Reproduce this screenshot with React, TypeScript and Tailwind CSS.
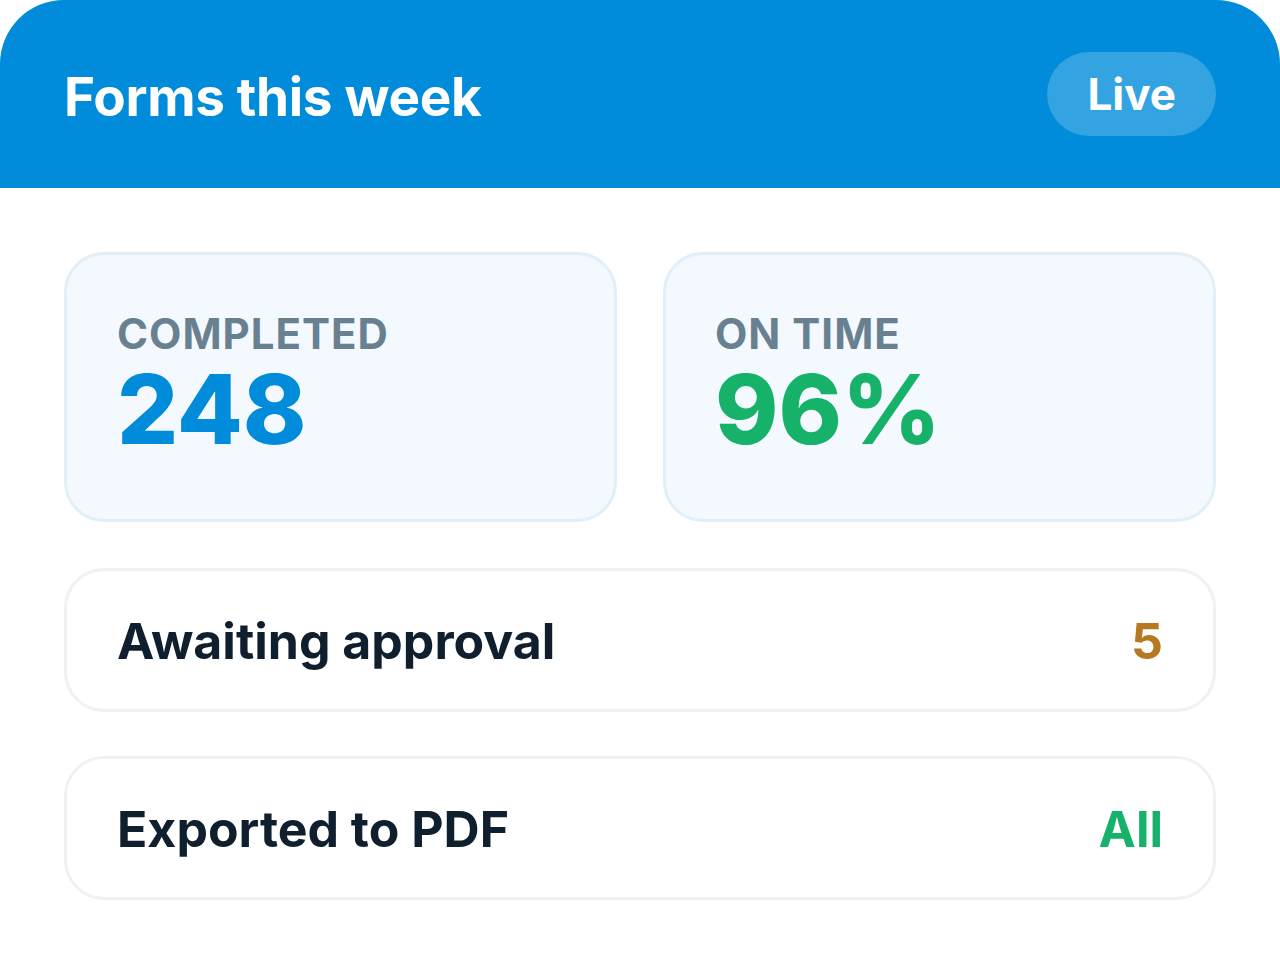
import React from "react";

export default function App() {
  return (
    <div className="w-[1280px] h-[964px] bg-white" style={{ fontFamily: "Inter, 'Noto Sans', sans-serif" }}>
      <div className="bg-[#008cdb] rounded-t-[64px] h-[188px] px-[64px] flex items-center justify-between">
        <h1 className="text-white font-bold text-[53px] leading-none tracking-[-0.3px] mt-[6px]">Forms this week</h1>
        <div className="h-[84px] px-[40px] rounded-full bg-[#33a3e2] flex items-center text-white font-bold text-[44px] leading-none">
          Live
        </div>
      </div>
      <div className="px-[64px] pt-[64px] flex flex-col gap-[44px]">
        <div className="grid grid-cols-2 gap-[46px] mb-[2px]">
          <div className="h-[270px] rounded-[40px] border-[3px] border-[#e1effa] bg-[#f3f9fe] px-[50px] pt-[58px] flex flex-col gap-[6px]">
            <div className="text-[#688090] font-bold text-[42px] leading-none tracking-[1px]">COMPLETED</div>
            <div className="text-[#008cdb] font-extrabold text-[96px] leading-none">248</div>
          </div>
          <div className="h-[270px] rounded-[40px] border-[3px] border-[#e1effa] bg-[#f3f9fe] px-[49px] pt-[58px] flex flex-col gap-[6px]">
            <div className="text-[#688090] font-bold text-[42px] leading-none tracking-[1px]">ON TIME</div>
            <div className="text-[#17b26a] font-extrabold text-[96px] leading-none">96%</div>
          </div>
        </div>
        <div className="h-[144px] rounded-[40px] border-[3px] border-[#eef2f5] bg-white pl-[50px] pr-[50px] flex items-center justify-between">
          <span className="text-[#0f1f2d] font-bold text-[50px] leading-none mt-[2px]">Awaiting approval</span>
          <span className="text-[#b7791f] font-bold text-[50px] leading-none mt-[2px]">5</span>
        </div>
        <div className="h-[144px] rounded-[40px] border-[3px] border-[#eef2f5] bg-white pl-[50px] pr-[50px] flex items-center justify-between">
          <span className="text-[#0f1f2d] font-bold text-[50px] leading-none mt-[2px]">Exported to PDF</span>
          <span className="text-[#17b26a] font-bold text-[50px] leading-none mt-[2px]">All</span>
        </div>
      </div>
    </div>
  );
}
